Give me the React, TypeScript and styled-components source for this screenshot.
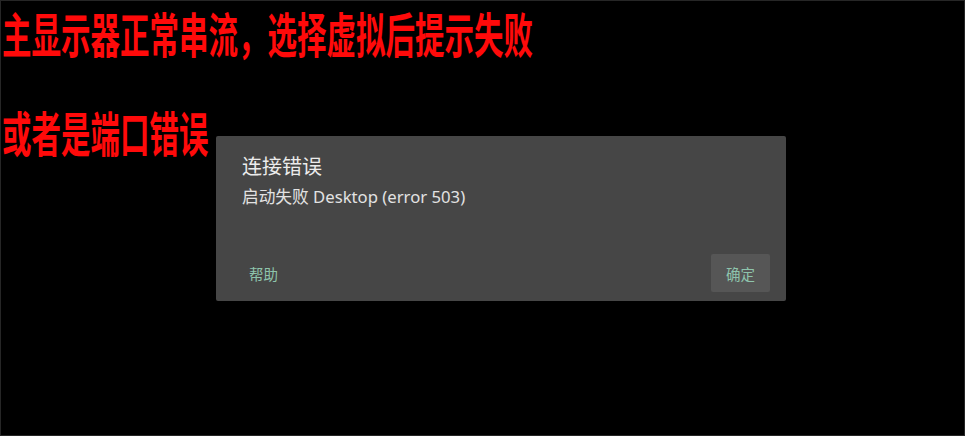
import React from "react";
import styled, { createGlobalStyle } from "styled-components";

const Global = createGlobalStyle`
  html, body { margin: 0; padding: 0; background: #000; }
  body { font-family: "Noto Sans", "Noto Sans CJK SC", sans-serif; }
`;

const Screen = styled.div`
  position: relative;
  width: 965px;
  height: 436px;
  box-sizing: border-box;
  background: #000;
  border: 1px solid #262626;
  overflow: hidden;
`;

const Notes = styled.div`
  display: flex;
  flex-direction: column;
  align-items: flex-start;
  gap: 53px;
  padding: 8px 0 0 1px;
`;

const Note = styled.div`
  display: inline-block;
  color: #ff0a0a;
  font-family: "Noto Sans CJK SC", sans-serif;
  font-weight: 600;
  font-size: 29.5px;
  line-height: 46px;
  white-space: nowrap;
  letter-spacing: 0px;
  transform: scaleY(1.6);
  transform-origin: left center;
`;

const Dialog = styled.div`
  position: absolute;
  left: 215px;
  top: 135px;
  width: 570px;
  height: 165px;
  box-sizing: border-box;
  background: #464646;
  border-radius: 2px;
  display: flex;
  flex-direction: column;
  padding: 17px 16px 9px 26px;
`;

const Title = styled.div`
  color: #ececec;
  font-size: 20px;
  line-height: 28px;
`;

const Message = styled.div`
  margin-top: 4px;
  color: #e2e2e2;
  font-size: 16.7px;
  line-height: 24px;
`;

const Actions = styled.div`
  margin-top: auto;
  display: flex;
  align-items: center;
  justify-content: space-between;
`;

const TextButton = styled.span`
  color: #8ec4ac;
  font-size: 14.5px;
  padding-left: 7px;
`;

const FilledButton = styled.span`
  width: 59px;
  height: 38px;
  display: flex;
  align-items: center;
  justify-content: center;
  background: #565656;
  border-radius: 2px;
  color: #8ec4ac;
  font-size: 14.5px;
`;

export default function App() {
  return (
    <>
      <Global />
      <Screen>
        <Notes>
          <Note>主显示器正常串流，选择虚拟后提示失败</Note>
          <Note>或者是端口错误</Note>
        </Notes>
        <Dialog>
          <Title>连接错误</Title>
          <Message>启动失败 Desktop (error 503)</Message>
          <Actions>
            <TextButton>帮助</TextButton>
            <FilledButton>确定</FilledButton>
          </Actions>
        </Dialog>
      </Screen>
    </>
  );
}
